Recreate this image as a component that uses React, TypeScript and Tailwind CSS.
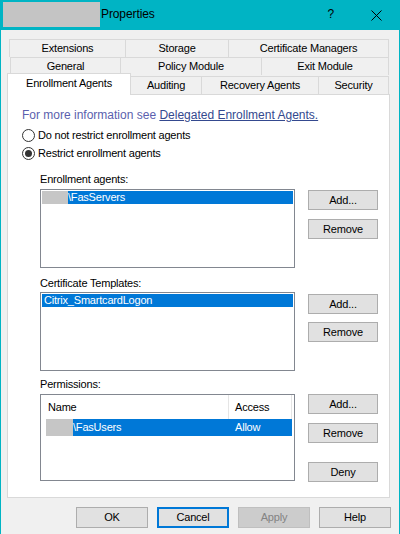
import React from "react";

const font = { fontFamily: '"Liberation Sans", Arial, sans-serif' };

function Tab({ label, w }: { label: string; w: string }) {
  return (
    <div className={`${w} h-[18px] border-t border-l border-r border-[#d9d9d9] -ml-px first:ml-0 bg-[#f0f0f0] flex items-center justify-center leading-none text-black`}>
      {label}
    </div>
  );
}

function Btn({ label, className = "" }: { label: string; className?: string }) {
  return (
    <div className={`w-[70px] h-[20px] bg-[#e1e1e1] border border-[#adadad] flex items-center justify-center text-black ${className}`}>
      {label}
    </div>
  );
}

function Radio({ checked, label }: { checked?: boolean; label: string }) {
  return (
    <div className="flex items-center h-[16px] text-black">
      <div className="w-[13px] h-[13px] rounded-full border border-[#333333] bg-white flex items-center justify-center">
        {checked && <div className="w-[7px] h-[7px] rounded-full bg-[#333333]" />}
      </div>
      <span className="ml-[3px]">{label}</span>
    </div>
  );
}

function Blank({ w }: { w: string }) {
  return <span className={`inline-block ${w} h-full bg-[#c6c6c6]`} />;
}

export default function App() {
  return (
    <div style={font} className="w-[400px] h-[534px] bg-[#f0f0f0] border-l border-r border-[#00b4c4] flex flex-col overflow-hidden text-[11px] tracking-[-0.2px]">
      {/* title bar */}
      <div className="h-[30px] bg-[#00b4c4] flex items-start shrink-0 text-[12px] tracking-[-0.1px]">
        <div className="ml-[2px] mt-[2px] w-[97px] h-[25px] bg-[#c4c4c4]" />
        <span className="ml-[1px] mt-[7px] leading-[14px] text-black">Properties</span>
        <span className="ml-auto mt-[7px] leading-[14px] text-black">?</span>
        <svg className="ml-[37px] mr-[17px] mt-[10px]" width="11" height="11" viewBox="0 0 11 11">
          <path d="M0.5 0.5 L10.5 10.5 M10.5 0.5 L0.5 10.5" stroke="#000" strokeWidth="1" />
        </svg>
      </div>

      {/* tabs */}
      <div className="mt-[9px] flex flex-col">
        <div className="flex ml-[8px]">
          <Tab label="Extensions" w="w-[117px]" />
          <Tab label="Storage" w="w-[104px]" />
          <Tab label="Certificate Managers" w="w-[161px]" />
        </div>
        <div className="flex ml-[9px]">
          <Tab label="General" w="w-[111px]" />
          <Tab label="Policy Module" w="w-[142px]" />
          <Tab label="Exit Module" w="w-[128px]" />
        </div>
        <div className="flex ml-[6px] items-end">
          <div className="w-[124px] h-[22px] -mt-[2px] bg-white border-t border-l border-r border-[#d9d9d9] relative z-10 -mb-px flex items-start justify-center pt-[2px] leading-[14px] text-black">
            Enrollment Agents
          </div>
          <div className="flex">
            <div className="w-[71px] h-[18px] border-t border-r border-[#d9d9d9] flex items-center justify-center leading-none">Auditing</div>
            <div className="w-[117px] h-[18px] border-t border-r border-[#d9d9d9] flex items-center justify-center leading-none">Recovery Agents</div>
            <div className="w-[70px] h-[18px] border-t border-r border-[#d9d9d9] flex items-center justify-center leading-none">Security</div>
          </div>
        </div>
      </div>

      {/* panel */}
      <div className="ml-[6px] w-[383px] h-[404px] bg-white border border-[#d9d9d9] flex flex-col pl-[14px] pt-[12px] text-black">
        <div className="h-[16px] leading-[16px] text-[12px] tracking-normal">
          <span className="text-[#5b5fae]">For more information see </span>
          <span className="text-[#34498f] underline">Delegated Enrollment Agents.</span>
        </div>
        <div className="mt-[4px]">
          <Radio label="Do not restrict enrollment agents" />
        </div>
        <div className="mt-[2px]">
          <Radio checked label="Restrict enrollment agents" />
        </div>

        <div className="ml-[18px] flex flex-col">
          {/* enrollment agents */}
          <div className="mt-[10px] h-[16px] leading-[16px]">Enrollment agents:</div>
          <div className="mt-[2px] flex items-start">
            <div className="w-[255px] h-[79px] border border-[#828790] bg-white p-px">
              <div className="h-[13px] bg-[#0078d7] text-white leading-[13px] flex">
                <Blank w="w-[26px]" />
                <span>\FasServers</span>
              </div>
            </div>
            <div className="ml-[13px] mt-px flex flex-col gap-[9px]">
              <Btn label="Add..." />
              <Btn label="Remove" />
            </div>
          </div>

          {/* certificate templates */}
          <div className="mt-[7px] h-[16px] leading-[16px]">Certificate Templates:</div>
          <div className="mt-[1px] flex items-start">
            <div className="w-[255px] h-[79px] border border-[#828790] bg-white p-px">
              <div className="h-[13px] bg-[#0078d7] text-white leading-[13px] pl-[2px]">Citrix_SmartcardLogon</div>
            </div>
            <div className="ml-[13px] mt-[2px] flex flex-col gap-[8px]">
              <Btn label="Add..." />
              <Btn label="Remove" />
            </div>
          </div>

          {/* permissions */}
          <div className="mt-[5px] h-[16px] leading-[16px]">Permissions:</div>
          <div className="mt-[2px] flex items-start">
            <div className="w-[255px] h-[87px] border border-[#828790] bg-white flex flex-col">
              <div className="h-[24px] flex shrink-0">
                <div className="w-[188px] border-r border-[#e5e5e5] pl-[7px] flex items-center">Name</div>
                <div className="w-[63px] border-r border-[#e5e5e5] pl-[6px] flex items-center">Access</div>
              </div>
              <div className="ml-[5px] w-[246px] h-[17px] bg-[#0078d7] text-white flex leading-[17px]">
                <div className="w-[183px] flex">
                  <Blank w="w-[27px]" />
                  <span>\FasUsers</span>
                </div>
                <span className="ml-[6px]">Allow</span>
              </div>
            </div>
            <div className="ml-[13px] flex flex-col">
              <Btn label="Add..." />
              <Btn label="Remove" className="mt-[9px]" />
              <Btn label="Deny" className="mt-[19px]" />
            </div>
          </div>
        </div>
      </div>

      {/* dialog buttons */}
      <div className="mt-[9px] ml-[75px] flex gap-[9px]">
        <div className="w-[72px] h-[21px] bg-[#e1e1e1] border border-[#adadad] flex items-center justify-center">OK</div>
        <div className="w-[72px] h-[21px] bg-[#e1e1e1] border-2 border-[#0078d7] flex items-center justify-center">Cancel</div>
        <div className="w-[72px] h-[21px] bg-[#cccccc] border border-[#bfbfbf] text-[#838383] flex items-center justify-center">Apply</div>
        <div className="w-[72px] h-[21px] bg-[#e1e1e1] border border-[#adadad] flex items-center justify-center">Help</div>
      </div>
    </div>
  );
}
